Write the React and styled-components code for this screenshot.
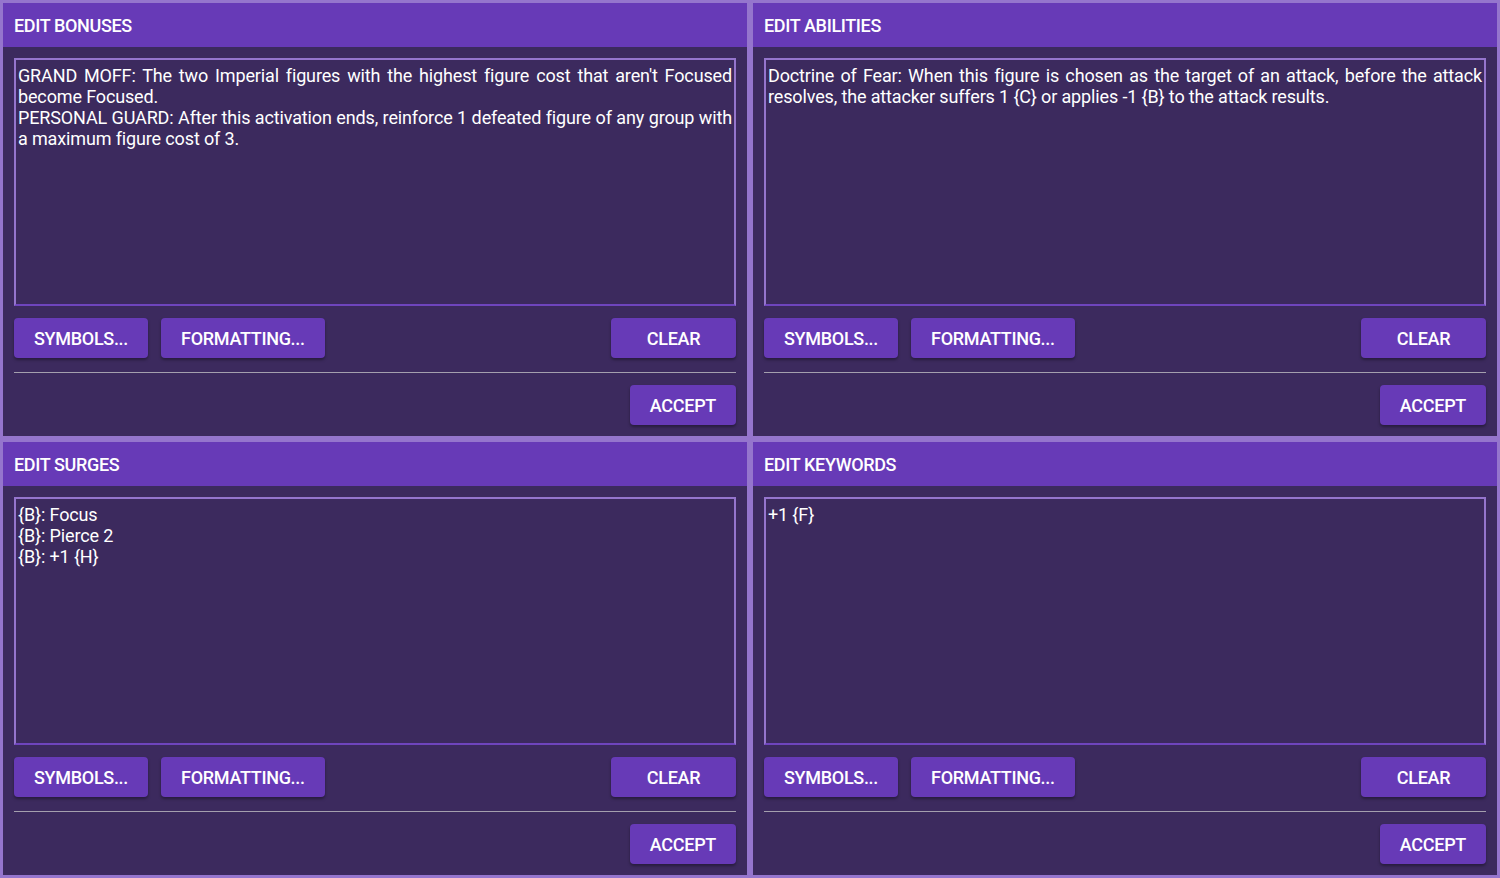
import styled, { createGlobalStyle } from "styled-components";

const Global = createGlobalStyle`
    html, body {
        margin: 0;
        background: #3c2a5e;
        font-family: Roboto, "Liberation Sans", sans-serif;
    }
`

const Grid = styled.div`
    display: grid;
    grid-template-columns: 750px 750px;
    grid-template-rows: 439px 439px;
    width: 1500px;
    height: 878px;
    overflow: hidden;
`

const Panel = styled.section`
    display: flex;
    flex-direction: column;
    box-sizing: border-box;
    border: 3px solid #9575cd;
    background-color: #3c2a5e;
    min-height: 0;
`

const Header = styled.h2`
    display: flex;
    align-items: center;
    height: 44px;
    margin: 0;
    padding: 0 11px;
    background-color: #673ab7;
    color: #fff;
    font-size: 18px;
    font-weight: 500;
    letter-spacing: -0.35px;
`

const Body = styled.div`
    display: flex;
    flex-direction: column;
    padding: 11px;
`

const TextArea = styled.textarea`
    box-sizing: border-box;
    width: 100%;
    height: 248px;
    margin: 0;
    padding: 5px 2px;
    resize: none;
    outline: none;
    border: 2px solid #9575cd;
    border-bottom-color: #6f45bd;
    background: transparent;
    color: #fff;
    font-family: Roboto, "Liberation Sans", sans-serif;
    font-size: 18px;
    line-height: 21px;
    letter-spacing: -0.14px;
    text-align: justify;
`

const Row = styled.div`
    display: flex;
    align-items: center;
    gap: 13px;
    margin-top: 12px;
    justify-content: ${p => (p.$end ? "flex-end" : "flex-start")};
`

const Button = styled.button`
    box-sizing: border-box;
    height: 40px;
    min-width: ${p => p.$min || 0}px;
    padding: 0 20px;
    margin-right: ${p => (p.$push ? "auto" : "0")};
    border: none;
    border-radius: 4px;
    background-color: #673ab7;
    color: #fff;
    font-family: Roboto, "Liberation Sans", sans-serif;
    font-size: 18px;
    font-weight: 500;
    letter-spacing: -0.3px;
    text-transform: uppercase;
    box-shadow: 0 2px 3px rgba(0, 0, 0, 0.35);
    cursor: pointer;
`

const Divider = styled.hr`
    margin: 14px 0 0;
    border: none;
    border-top: 1px solid #a49fae;
`

const panels = [
    {
        title: "Edit Bonuses",
        text: "GRAND MOFF: The two Imperial figures with the highest figure cost that aren't Focused become Focused.\nPERSONAL GUARD: After this activation ends, reinforce 1 defeated figure of any group with a maximum figure cost of 3.",
    },
    {
        title: "Edit Abilities",
        text: "Doctrine of Fear: When this figure is chosen as the target of an attack, before the attack resolves, the attacker suffers 1 {C} or applies -1 {B} to the attack results.",
    },
    {
        title: "Edit Surges",
        text: "{B}: Focus\n{B}: Pierce 2\n{B}: +1 {H}",
    },
    {
        title: "Edit Keywords",
        text: "+1 {F}",
    },
];

const EditPanel = ({ title, text }) => (
    <Panel>
        <Header>{title.toUpperCase()}</Header>
        <Body>
            <TextArea readOnly defaultValue={text} />
            <Row>
                <Button>Symbols...</Button>
                <Button $push>Formatting...</Button>
                <Button $min={125}>Clear</Button>
            </Row>
            <Divider />
            <Row $end>
                <Button>Accept</Button>
            </Row>
        </Body>
    </Panel>
);

const App = () => {
    return <>
        <Global />
        <Grid>
            {panels.map(p => <EditPanel key={p.title} {...p} />)}
        </Grid>
    </>
};

export default App
